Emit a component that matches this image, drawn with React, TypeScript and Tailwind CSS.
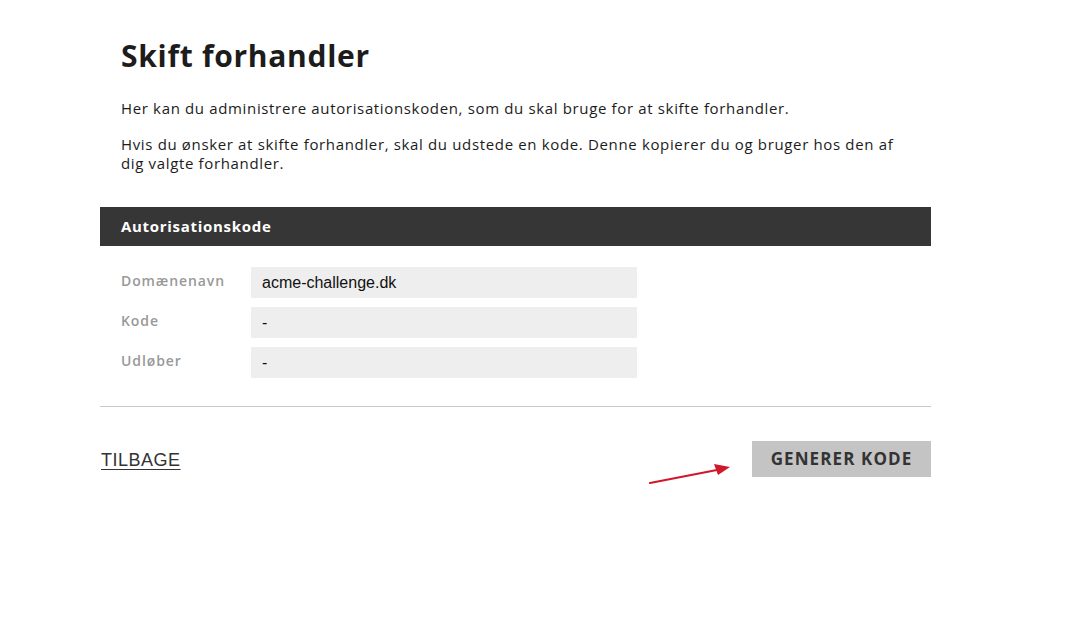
export default function App() {
  return (
    <div className="min-h-screen bg-white font-['Open_Sans',sans-serif] text-[#1c1c1c]">
      <div className="relative ml-[100px] w-[831px] pt-[36px]">
        <div className="px-[21px]">
          <h1 className="text-[30px] font-bold leading-[40px] tracking-[0.7px]">Skift forhandler</h1>
          <p className="mt-[22px] text-[15px] leading-[20px] tracking-[0.65px]">
            Her kan du administrere autorisationskoden, som du skal bruge for at skifte forhandler.
          </p>
          <p className="mt-[17px] text-[15px] leading-[19px] tracking-[0.65px]">
            Hvis du ønsker at skifte forhandler, skal du udstede en kode. Denne kopierer du og bruger hos den af
            dig valgte forhandler.
          </p>
        </div>

        <div className="mt-[34px] flex h-[39px] items-center bg-[#363636] px-[21px] text-[15px] font-bold tracking-[0.7px] text-white">
          Autorisationskode
        </div>

        <div className="mt-[21px] flex flex-col gap-[9px] px-[21px]">
          {[
            ['Domænenavn', 'acme-challenge.dk'],
            ['Kode', '-'],
            ['Udløber', '-'],
          ].map(([label, value]) => (
            <div key={label} className="flex items-start">
              <div className="w-[130px] pt-[3px] text-[14px] font-semibold tracking-[0.9px] text-[#999999]">{label}</div>
              <div className="flex h-[31px] w-[386px] items-center bg-[#eeeeee] px-[11px] font-['Liberation_Sans',Arial,sans-serif] text-[16px] text-[#111]">
                {value}
              </div>
            </div>
          ))}
        </div>

        <div className="mt-[28px] h-px bg-[#c8c8c8]" />

        <div className="mt-[34px] flex items-center justify-between">
          <a className="ml-px mt-[2px] font-['Liberation_Sans',Arial,sans-serif] text-[18px] tracking-[0.5px] text-[#333] underline underline-offset-[3px]" href="#">
            TILBAGE
          </a>
          <button className="flex h-[36px] w-[179px] items-center justify-center bg-[#c4c4c4] text-[17px] font-bold tracking-[1.1px] text-[#333]">
            GENERER KODE
          </button>
        </div>

        <svg className="absolute left-[548px] top-[462px]" width="84" height="24" viewBox="0 0 84 24">
          <line x1="2" y1="21" x2="74" y2="7" stroke="#d0182a" strokeWidth="2.2" strokeLinecap="round" />
          <path d="M66 2 L82 5 L70 13 Z" fill="#d0182a" />
        </svg>
      </div>
    </div>
  )
}
